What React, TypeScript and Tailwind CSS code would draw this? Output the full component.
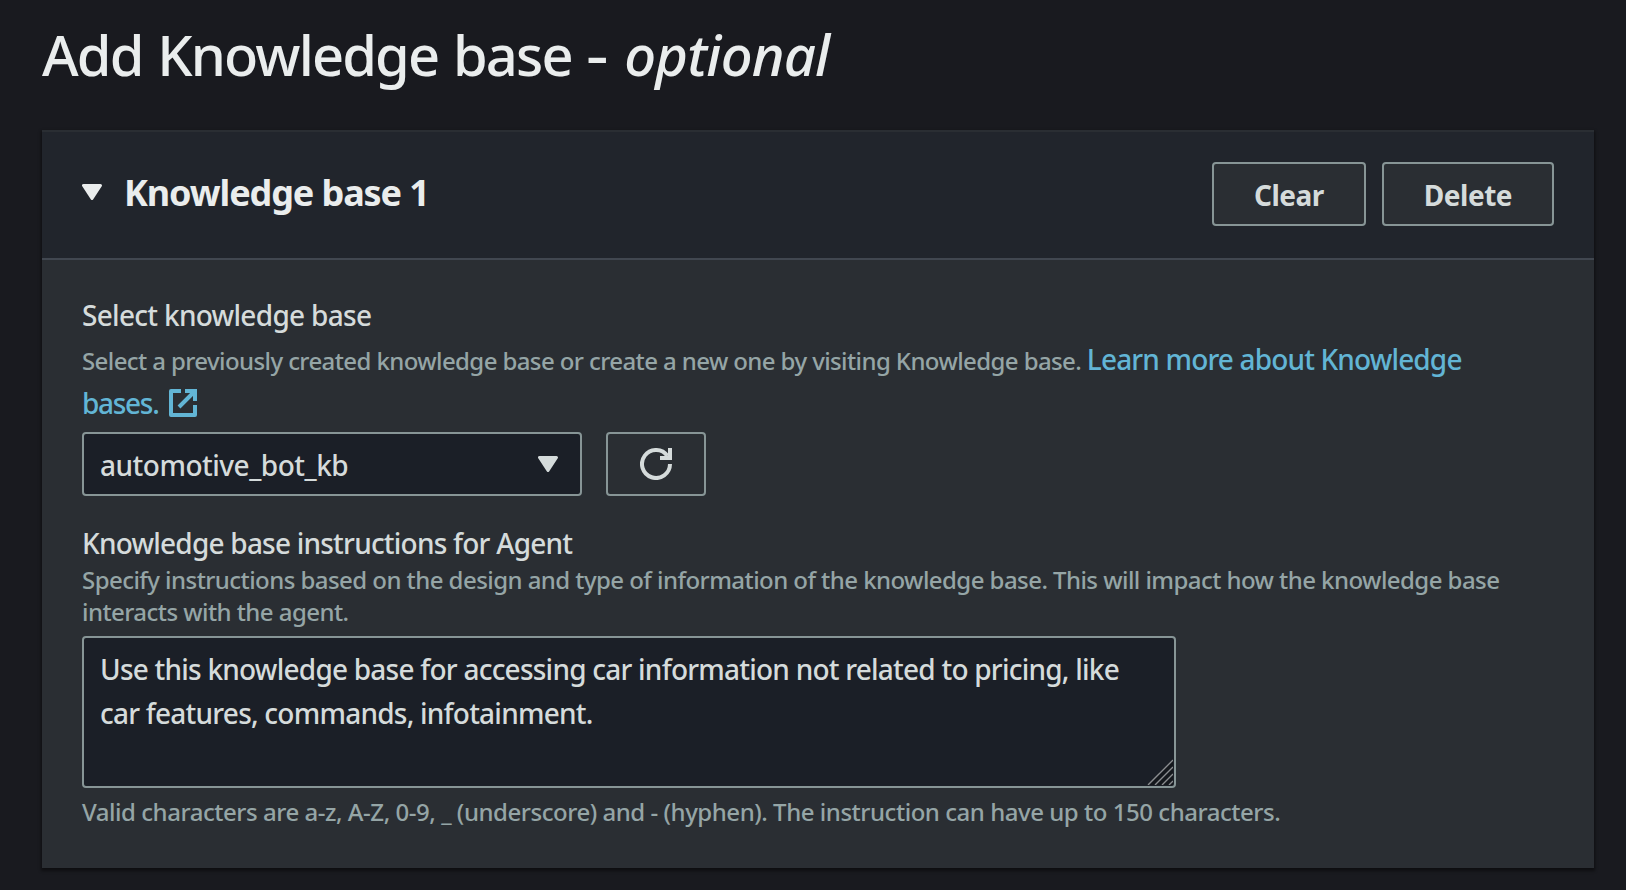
import React from "react";

function CaretDown({ className }: { className?: string }) {
  return (
    <svg width="20" height="16" viewBox="0 0 20 16" className={className} aria-hidden="true">
      <path d="M1.5 1.5H18.5L10 14.5Z" fill="currentColor" stroke="currentColor" strokeWidth="3" strokeLinejoin="round" />
    </svg>
  );
}

function ExternalIcon() {
  return (
    <svg width="28" height="28" viewBox="0 0 28 28" fill="none" stroke="currentColor" strokeWidth="4" className="ml-[11px] inline-block align-[-3px]" aria-hidden="true">
      <path d="M12 2H2V26H26V16" strokeLinejoin="round" />
      <path d="M16 2H26V12M26 2L10 18" />
    </svg>
  );
}

function RefreshIcon() {
  return (
    <svg width="32" height="32" viewBox="0 0 32 32" fill="none" stroke="currentColor" strokeWidth="4" aria-hidden="true">
      <path d="M30 16A14 14 0 1 1 27.5 8" />
      <path d="M30 0V10H20" />
    </svg>
  );
}

function ResizeHandle() {
  return (
    <svg width="26" height="26" viewBox="0 0 26 26" className="absolute right-[3px] bottom-[3px]" aria-hidden="true">
      <path d="M0 26L26 0V26Z" fill="#15181d" />
      <path d="M1 26L26 1M8 26L26 8M15 26L26 15M22 26L26 22" stroke="#8b8d90" strokeWidth="1.4" />
    </svg>
  );
}

function Button({ children }: { children: React.ReactNode }) {
  return (
    <button className="h-16 rounded-[4px] border-2 border-[#879596] bg-[#2a2e33] px-10 pt-px text-[28px] leading-none font-bold tracking-[-0.5px] text-[#d5dbdb]">
      {children}
    </button>
  );
}

export default function App() {
  return (
    <main className="h-[890px] w-full overflow-hidden bg-[#191a1f] pt-[17px] pr-8 pl-[42px] font-['Noto_Sans',sans-serif] font-medium">
      <h1 className="text-[56px] leading-[74px] font-medium tracking-[-1.85px] text-[#eaeded] [word-spacing:2px]">
        Add Knowledge base <span className="mr-[5px] ml-0.5 inline-block scale-x-[1.25]">-</span>{" "}
        <i className="tracking-[-0.8px]">optional</i>
      </h1>

      <section className="mt-[39px] h-[738px] border-t-2 border-[#2a2e33] bg-[#2a2e33] shadow-[0_2px_3px_1px_rgba(0,0,0,0.45)]">
        <header className="flex h-32 items-center justify-between border-b-2 border-[#414750] bg-[#21252c] pr-10 pb-0.5 pl-10">
          <div className="flex items-center text-[#eaeded]">
            <CaretDown className="mb-1" />
            <h2 className="mb-0.5 ml-[22px] text-[36px] leading-[44px] font-bold tracking-[-1.1px]">Knowledge base 1</h2>
          </div>
          <div className="flex gap-4">
            <Button>Clear</Button>
            <Button>Delete</Button>
          </div>
        </header>

        <div className="px-10 pt-[35px]">
          <label className="block text-[28px] leading-10 tracking-[-0.7px] text-[#d5dbdb]">Select knowledge base</label>
          <p className="mt-0.5 text-[28px] leading-[44px] text-[#95a5a6]">
            <span className="text-[24px] leading-none tracking-[-0.6px]">
              Select a previously created knowledge base or create a new one by visiting Knowledge base.{" "}
            </span>
            <a className="tracking-[-0.85px] text-[#62b5d5]">
              Learn more about Knowledge{" "}
              <span className="tracking-[-1.3px] whitespace-nowrap">
                bases.
                <ExternalIcon />
              </span>
            </a>
          </p>

          <div className="mt-[7px] flex gap-6">
            <div className="flex h-16 w-[500px] items-center justify-between rounded-[4px] border-2 border-[#879596] bg-[#1b1f27] pr-[22px] pl-4 text-[28px] leading-none tracking-[-0.5px] text-[#d5dbdb]">
              <span className="pt-px">automotive_bot_kb</span>
              <CaretDown />
            </div>
            <button className="flex h-16 w-[100px] items-center justify-center rounded-[4px] border-2 border-[#879596] text-[#d5dbdb]" aria-label="Refresh">
              <RefreshIcon />
            </button>
          </div>

          <label className="mt-[27px] block text-[28px] leading-10 tracking-[-0.78px] text-[#d5dbdb]">
            Knowledge base instructions for Agent
          </label>
          <p className="mt-px text-[24px] leading-8 tracking-[-0.56px] text-[#95a5a6]">
            Specify instructions based on the design and type of information of the knowledge base. This will impact how the knowledge base interacts with the agent.
          </p>

          <div className="relative mt-2 h-[152px] w-[1094px]">
            <textarea
              readOnly
              className="block h-full w-full resize-none overflow-hidden rounded-[4px] border-2 border-[#879596] bg-[#1b1f27] px-4 pt-[9px] text-[28px] leading-[44px] tracking-[-0.77px] text-[#d5dbdb] outline-none"
              value="Use this knowledge base for accessing car information not related to pricing, like car features, commands, infotainment."
            />
            <ResizeHandle />
          </div>
          <p className="mt-2 text-[24px] leading-8 tracking-[-0.465px] text-[#95a5a6]">
            Valid characters are a-z, A-Z, 0-9, _ (underscore) and - (hyphen). The instruction can have up to 150 characters.
          </p>
        </div>
      </section>
    </main>
  );
}
